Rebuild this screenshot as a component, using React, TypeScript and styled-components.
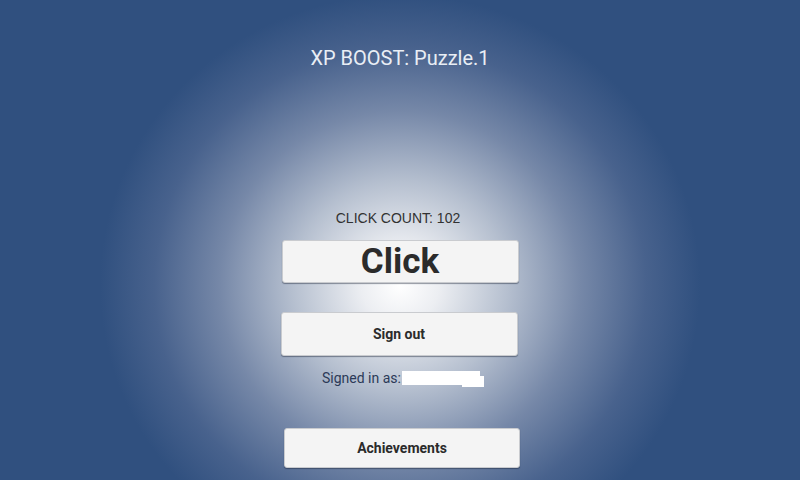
import React from 'react';
import styled, { createGlobalStyle } from 'styled-components';

const GlobalStyle = createGlobalStyle`
  html, body {
    margin: 0;
    padding: 0;
    width: 800px;
    height: 480px;
    overflow: hidden;
  }
`;

const Screen = styled.div`
  width: 800px;
  height: 480px;
  display: flex;
  flex-direction: column;
  align-items: center;
  box-sizing: border-box;
  padding-top: 47px;
  background-color: #30507f;
  background-image: radial-gradient(
    ellipse 300px 290px at 400px 285px,
    #ffffff 0%,
    #eceef2 13%,
    #b5bfcf 36%,
    #7688a8 60%,
    #48628d 82%,
    #30507f 100%
  );
  font-family: Roboto, "Liberation Sans", sans-serif;
`;

const Title = styled.div`
  font-size: 20px;
  line-height: 22px;
  color: #e9eef5;
`;

const Count = styled.div`
  margin-top: 141px;
  margin-left: -4px;
  font-family: "Liberation Sans", Arial, sans-serif;
  font-size: 14px;
  line-height: 16px;
  color: #323232;
`;

const Button = styled.button<{ $top: number; $height: number; $width: number; $size: number; $nudge?: number }>`
  margin-top: ${p => p.$top}px;
  margin-left: ${p => (p.$nudge || 0) * 2}px;
  width: ${p => p.$width}px;
  height: ${p => p.$height}px;
  padding: 0;
  display: flex;
  align-items: center;
  justify-content: center;
  background: #f4f4f4;
  border: 1px solid #c9cbcf;
  border-radius: 3px;
  box-shadow: 0 1px 1px rgba(20, 30, 50, 0.45);
  font-family: Roboto, "Liberation Sans", sans-serif;
  font-weight: 700;
  font-size: ${p => p.$size}px;
  color: #2b2b2b;
  cursor: pointer;
`;

const SignedIn = styled.div`
  margin-top: 14px;
  margin-left: 2px;
  display: flex;
  align-items: center;
  font-size: 14px;
  line-height: 16px;
  color: #2c3a58;
`;

const Redacted = styled.span`
  position: relative;
  display: inline-block;
  width: 78px;
  height: 14px;
  margin-left: 1px;
  background: #ffffff;

  &::after {
    content: "";
    position: absolute;
    right: -4px;
    top: 5px;
    width: 22px;
    height: 11px;
    background: #ffffff;
  }
`;

export default function App() {
  return (
    <>
      <GlobalStyle />
      <Screen>
        <Title>XP BOOST: Puzzle.1</Title>
        <Count>CLICK COUNT: 102</Count>
        <Button $top={14} $height={43} $width={237} $size={35}>Click</Button>
        <Button $top={29} $height={44} $width={237} $size={14} $nudge={-1}>Sign out</Button>
        <SignedIn>
          Signed in as:<Redacted />
        </SignedIn>
        <Button $top={42} $height={40} $width={236} $size={14} $nudge={2}>Achievements</Button>
      </Screen>
    </>
  );
}
